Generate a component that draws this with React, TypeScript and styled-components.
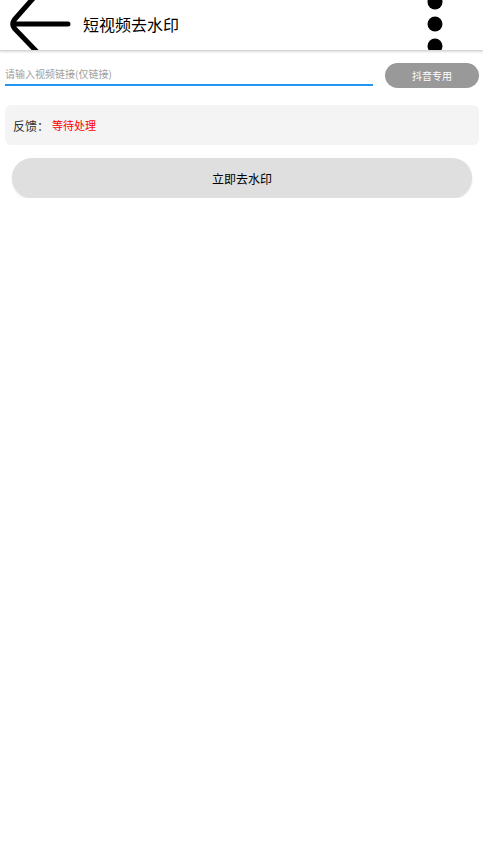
import styled, { createGlobalStyle } from 'styled-components';

const GlobalStyle = createGlobalStyle`
  html, body {
    margin: 0;
    padding: 0;
    background: #ffffff;
    font-family: "Noto Sans CJK SC", "Noto Sans", sans-serif;
  }
`;

const StyledHeader = styled.div`
  display: flex;
  align-items: center;
  height: 50px;
  overflow: hidden;
  border-bottom: 1px solid #d6d6d6;
  box-shadow: 0 1px 2px rgba(0, 0, 0, 0.15);
`;

const StyledBackIcon = styled.svg`
  flex: none;
  width: 72px;
  height: 50px;
`;

const StyledTitle = styled.div`
  flex: 1;
  margin-left: 11px;
  margin-bottom: 2px;
  font-size: 16px;
  color: #000;
`;

const StyledMoreIcon = styled.svg`
  flex: none;
  width: 20px;
  height: 50px;
  margin-right: 38px;
`;

const StyledBody = styled.div`
  display: flex;
  flex-direction: column;
  padding: 12px 4px 0 5px;
`;

const StyledInputRow = styled.div`
  display: flex;
  align-items: flex-start;
  gap: 12px;
`;

const StyledInput = styled.input`
  flex: 1;
  height: 21px;
  margin-top: 0;
  padding: 0;
  border: none;
  border-bottom: 2px solid #2196f3;
  outline: none;
  background: transparent;
  font-family: inherit;
  font-size: 10px;
  color: #333;

  &::placeholder {
    color: #a0a0a0;
  }
`;

const StyledTagButton = styled.button`
  flex: none;
  width: 94px;
  height: 25px;
  border: none;
  border-radius: 13px;
  background: #999999;
  color: #ffffff;
  font-family: inherit;
  font-size: 10px;
`;

const StyledFeedback = styled.div`
  display: flex;
  align-items: center;
  height: 40px;
  margin-top: 17px;
  padding: 0 8px;
  border-radius: 6px;
  background: #f4f4f4;
  font-size: 12px;
`;

const StyledLabel = styled.span`
  color: #333;
  margin-right: 3px;
`;

const StyledStatus = styled.span<{ $color: string }>`
  color: ${(p) => p.$color};
  font-size: 11px;
`;

const StyledMainButton = styled.button`
  height: 40px;
  margin: 13px 7px 0;
  border: none;
  border-radius: 20px;
  background: #dfdfdf;
  box-shadow: 0 1px 2px rgba(0, 0, 0, 0.12);
  color: #000;
  font-family: inherit;
  font-size: 12px;
`;

const App = () => {
  return (
    <>
      <GlobalStyle />
      <StyledHeader>
        <StyledBackIcon viewBox="0 0 72 50">
          <path
            d="M68 24 H16 M37 -6 L14.5 19.5 Q11 24 14.5 28.5 L39 54"
            fill="none"
            stroke="#000"
            strokeWidth="5"
            strokeLinecap="round"
            strokeLinejoin="round"
          />
        </StyledBackIcon>
        <StyledTitle>短视频去水印</StyledTitle>
        <StyledMoreIcon viewBox="0 0 20 50">
          <circle cx="10" cy="2" r="7.5" fill="#000" />
          <circle cx="10" cy="24" r="7.5" fill="#000" />
          <circle cx="10" cy="46" r="7.5" fill="#000" />
        </StyledMoreIcon>
      </StyledHeader>
      <StyledBody>
        <StyledInputRow>
          <StyledInput placeholder="请输入视频链接(仅链接)" />
          <StyledTagButton>抖音专用</StyledTagButton>
        </StyledInputRow>
        <StyledFeedback>
          <StyledLabel>反馈：</StyledLabel>
          <StyledStatus $color="#ff0000">等待处理</StyledStatus>
        </StyledFeedback>
        <StyledMainButton>立即去水印</StyledMainButton>
      </StyledBody>
    </>
  );
};

export default App;
